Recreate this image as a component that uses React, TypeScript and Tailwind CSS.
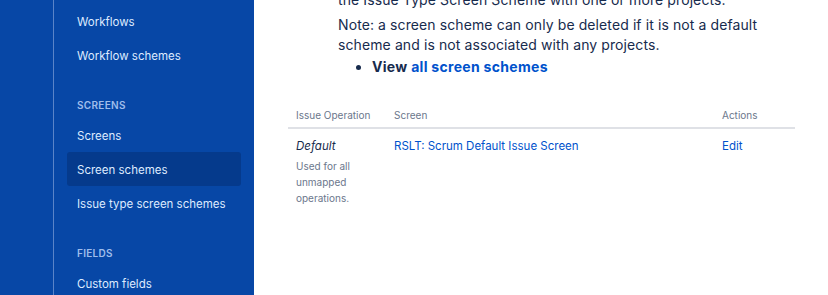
import React from "react";

const font = { fontFamily: 'Inter, "Liberation Sans", Arial, sans-serif' };

function NavItem({ label, active }: { label: string; active?: boolean }) {
  return (
    <div
      className={
        "h-[34px] flex items-center pt-[3px] px-[10px] rounded-[3px] text-[11.5px] whitespace-nowrap text-[#DEEBFF] " +
        (active ? "bg-[#053A8C]" : "")
      }
    >
      {label}
    </div>
  );
}

function Header({ label }: { label: string }) {
  return (
    <div className="mt-[25px] mb-[5px] h-[16px] leading-[16px] px-[10px] text-[10px] font-semibold tracking-[0.3px] text-[#9FBDEB]">
      {label}
    </div>
  );
}

export default function App() {
  return (
    <div className="flex w-[828px] h-[295px] overflow-hidden bg-white" style={font}>
      <aside className="flex w-[254px] h-full bg-[#0747A6] shrink-0">
        <div className="w-[54px] h-full border-r border-[#5A84C8]" />
        <nav className="flex-1 px-[13px] pt-[4px]">
          <NavItem label="Workflows" />
          <NavItem label="Workflow schemes" />
          <Header label="SCREENS" />
          <NavItem label="Screens" />
          <NavItem label="Screen schemes" active />
          <NavItem label="Issue type screen schemes" />
          <Header label="FIELDS" />
          <NavItem label="Custom fields" />
        </nav>
      </aside>
      <main className="flex-1 pl-[34px] pr-[33px] text-[#172B4D]">
        <div className="ml-[50px] text-[14px] leading-[20px] tracking-[0.1px]">
          <p className="mt-[-10px] whitespace-nowrap">the Issue Type Screen Scheme with one or more projects.</p>
          <p className="mt-[5px]">
            Note: a screen scheme can only be deleted if it is not a default
            <br />
            scheme and is not associated with any projects.
          </p>
          <ul className="mt-[2px] pl-[34px] list-disc">
            <li className="font-bold tracking-[0.3px]">
              View <span className="text-[#0052CC]">all screen schemes</span>
            </li>
          </ul>
        </div>
        <div className="mt-[26px]">
          <div className="grid grid-cols-[98px_328px_1fr] border-b-2 border-[#DFE1E6] text-[10px] leading-[16px] text-[#6B778C]">
            <div className="px-[8px] pt-[4px] pb-[4px]">Issue Operation</div>
            <div className="px-[8px] pt-[4px] pb-[4px]">Screen</div>
            <div className="px-[8px] pt-[4px] pb-[4px]">Actions</div>
          </div>
          <div className="grid grid-cols-[98px_328px_1fr] text-[11.5px] leading-[20px]">
            <div className="px-[8px] pt-[7px]">
              <div className="italic">Default</div>
              <div className="mt-[2px] text-[10px] leading-[16px] text-[#6B778C]">
                Used for all unmapped operations.
              </div>
            </div>
            <div className="px-[8px] pt-[7px] text-[#0052CC]">RSLT: Scrum Default Issue Screen</div>
            <div className="px-[8px] pt-[7px] text-[#0052CC]">Edit</div>
          </div>
        </div>
      </main>
    </div>
  );
}
